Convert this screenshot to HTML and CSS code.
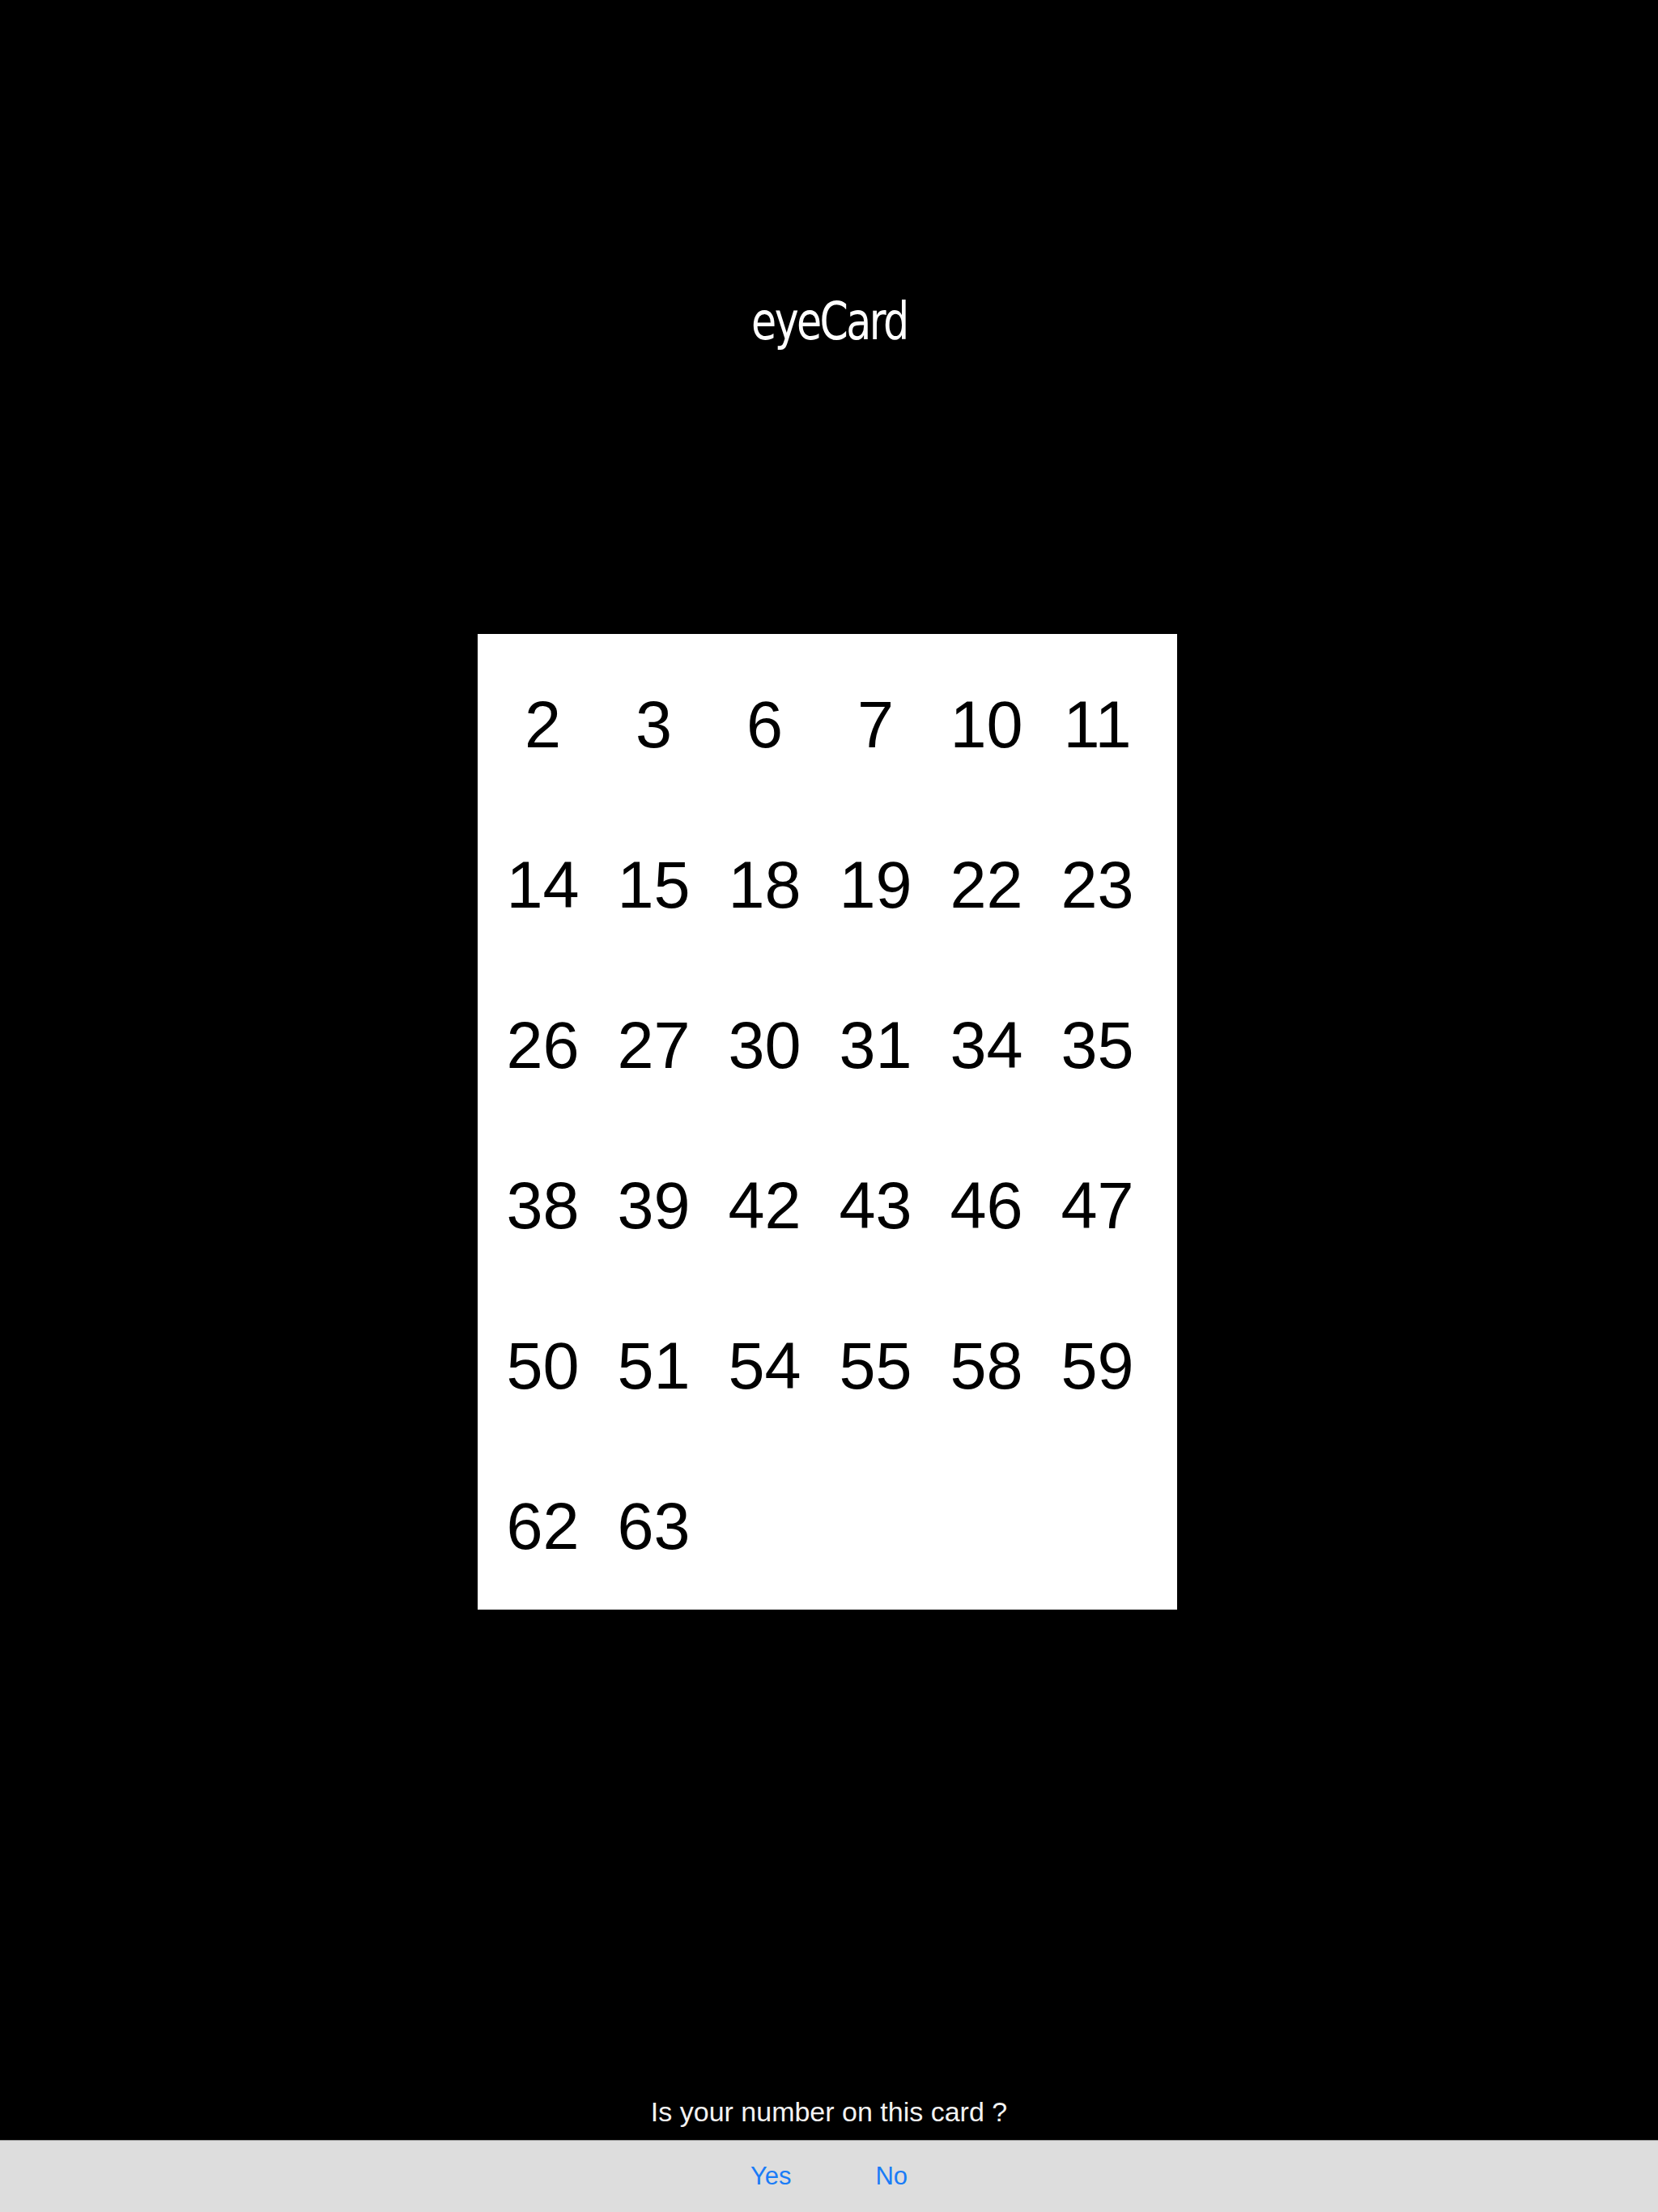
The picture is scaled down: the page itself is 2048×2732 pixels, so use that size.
FILE: index.html
```html
<!DOCTYPE html>
<html lang="en">

<head>
    <meta charset="UTF-8">
    <meta name="viewport" content="width=device-width, initial-scale=1.0">
    <title>eyeCard</title>
    <link rel="stylesheet" href="styles.css">
</head>

<body>
    <div class="screen">
        <h1 class="title"><span class="title-text">eyeCard</span></h1>
        <div class="card">
            <span>2</span><span>3</span><span>6</span><span>7</span><span>10</span><span>11</span>
            <span>14</span><span>15</span><span>18</span><span>19</span><span>22</span><span>23</span>
            <span>26</span><span>27</span><span>30</span><span>31</span><span>34</span><span>35</span>
            <span>38</span><span>39</span><span>42</span><span>43</span><span>46</span><span>47</span>
            <span>50</span><span>51</span><span>54</span><span>55</span><span>58</span><span>59</span>
            <span>62</span><span>63</span>
        </div>
        <div class="spacer"></div>
        <p class="question">Is your number on this card ?</p>
        <div class="toolbar">
            <a class="btn">Yes</a>
            <a class="btn">No</a>
        </div>
    </div>
</body>

</html>
```

FILE: styles.css
```css
* {
    margin: 0;
    padding: 0;
}

body {
    background: #000;
    font-family: "Liberation Sans", Arial, sans-serif;
}

.screen {
    height: 2732px;
    display: flex;
    flex-direction: column;
}

.title {
    margin-top: 364px;
    height: 66px;
    font-family: "Liberation Sans Narrow", "DejaVu Sans Condensed", "Liberation Sans", sans-serif;
    font-stretch: condensed;
    font-size: 64px;
    line-height: 66px;
    font-weight: normal;
    letter-spacing: -3px;
    color: #fff;
    text-align: center;
}

.title-text {
    display: inline-block;
    transform: scaleX(0.88);
}

.card {
    margin: 353px 0 0 590px;
    width: 864px;
    box-sizing: border-box;
    padding: 13px 30px 4px 12px;
    background: #fff;
    display: grid;
    grid-template-columns: repeat(6, 137px);
    grid-auto-rows: 198px;
    font-size: 81px;
    line-height: 198px;
    text-align: center;
    color: #000;
}

.spacer {
    flex: 1;
}

.question {
    margin-bottom: 18px;
    font-size: 34px;
    line-height: 34px;
    color: #f2f2f2;
    text-align: center;
}

.toolbar {
    height: 88px;
    border-top: 1px solid #9c9c9c;
    background: #dddddd;
    display: flex;
    justify-content: center;
    gap: 104px;
}

.btn {
    margin-top: 28px;
    font-size: 31px;
    line-height: 31px;
    height: 31px;
    color: #1a7cf7;
}
```
